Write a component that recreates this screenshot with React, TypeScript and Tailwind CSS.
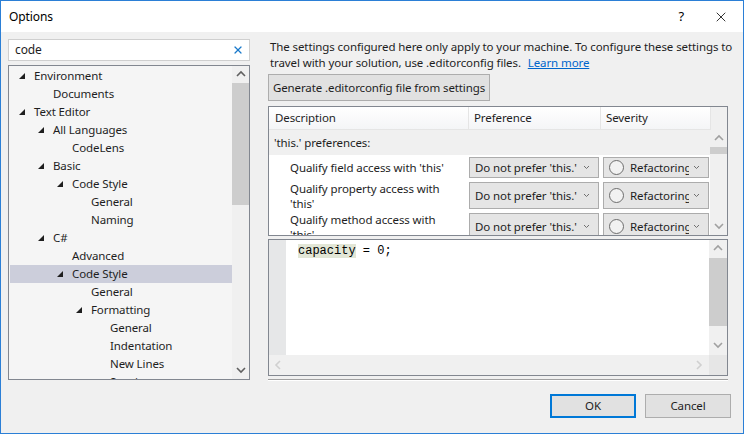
import { X } from "lucide-react";

interface TreeItem {
  label: string;
  depth: number;
  expanded?: boolean;
  selected?: boolean;
}

const tree: TreeItem[] = [
  { label: "Environment", depth: 0, expanded: true },
  { label: "Documents", depth: 1 },
  { label: "Text Editor", depth: 0, expanded: true },
  { label: "All Languages", depth: 1, expanded: true },
  { label: "CodeLens", depth: 2 },
  { label: "Basic", depth: 1, expanded: true },
  { label: "Code Style", depth: 2, expanded: true },
  { label: "General", depth: 3 },
  { label: "Naming", depth: 3 },
  { label: "C#", depth: 1, expanded: true },
  { label: "Advanced", depth: 2 },
  { label: "Code Style", depth: 2, expanded: true, selected: true },
  { label: "General", depth: 3 },
  { label: "Formatting", depth: 3, expanded: true },
  { label: "General", depth: 4 },
  { label: "Indentation", depth: 4 },
  { label: "New Lines", depth: 4 },
  { label: "Spacing", depth: 4 },
];

const rows = [
  { text: ["Qualify field access with 'this'"], h: "h-[25px]" },
  { text: ["Qualify property access with", "'this'"], h: "h-[31px]" },
  { text: ["Qualify method access with", "'this'"], h: "h-[31px]" },
];

const font = "font-['Segoe_UI','Noto_Sans',sans-serif]";

function Expander() {
  return (
    <svg width="6" height="6" viewBox="0 0 6 6" className="block">
      <polygon points="6,0 6,6 0,6" fill="#1e1e1e" />
    </svg>
  );
}

function Chevron({ dir, color = "#606060" }: { dir: "up" | "down" | "left" | "right"; color?: string }) {
  const pts = {
    up: "1,6 5,2 9,6",
    down: "1,2 5,6 9,2",
    left: "6,1 2,5 6,9",
    right: "3,1 7,5 3,9",
  }[dir];
  return (
    <svg width="10" height="10" viewBox="0 0 10 10" className="block">
      <polyline points={pts} fill="none" stroke={color} strokeWidth="1.6" />
    </svg>
  );
}

function SmallChevron() {
  return (
    <svg width="7" height="5" viewBox="0 0 7 5" className="block">
      <polyline points="1,1 3.5,3.5 6,1" fill="none" stroke="#707070" strokeWidth="1" />
    </svg>
  );
}

function Dropdown({ severity }: { severity?: boolean }) {
  return (
    <div className="flex h-full items-center border border-[#acacac] bg-[#e5e5e5] pl-[5px] pr-[8px] overflow-hidden">
      {severity && <span className="mr-[6px] h-[15px] w-[15px] shrink-0 rounded-full border border-[#6d6d6d] bg-[#f2f2f2]" />}
      <span className="flex-1 overflow-hidden whitespace-nowrap">{severity ? "Refactoring" : "Do not prefer 'this.'"}</span>
      <span className="ml-[4px] shrink-0">
        <SmallChevron />
      </span>
    </div>
  );
}

export default function App() {
  return (
    <div className={`${font} text-[11.5px] tracking-[-0.1px] text-[#1e1e1e] w-[744px] h-[434px] border border-[#2b7fd6] bg-[#f0f0f0] flex flex-col overflow-hidden`}>
      {/* title bar */}
      <div className="h-[31px] bg-white flex items-center shrink-0">
        <span className="ml-[8px] text-[12px] text-black">Options</span>
        <span className="ml-auto mr-[29px] text-[13px] text-black">?</span>
        <span className="mr-[14px] text-black">
          <X size={16} strokeWidth={1.2} />
        </span>
      </div>

      <div className="flex flex-1 min-h-0 pt-[7px] pl-[7px]">
        {/* left column */}
        <div className="w-[242px] flex flex-col shrink-0">
          <div className="h-[22px] bg-white border border-[#cfcfcf] flex items-center pl-[6px] pr-[5px]">
            <span className="flex-1 text-[12px]">code</span>
            <X size={12} strokeWidth={2.4} className="text-[#1979ca]" />
          </div>
          <div className="mt-[4px] h-[315px] border border-[#828790] bg-[#f5f5f5] flex overflow-hidden">
            <div className="flex-1 pt-[1px] pl-[1px] overflow-hidden">
              {tree.map((t, i) => (
                <div
                  key={i}
                  className={`h-[18px] flex items-center whitespace-nowrap text-[#1e1e1e] ${t.selected ? "bg-[#cccedb]" : ""}`}
                >
                  <span className="shrink-0" style={{ width: 9 + t.depth * 19 }} />
                  <span className="w-[8px] shrink-0 flex items-center">{t.expanded && <Expander />}</span>
                  <span className="ml-[7px]">{t.label}</span>
                </div>
              ))}
            </div>
            <div className="w-[17px] bg-[#f0f0f0] flex flex-col items-center shrink-0">
              <div className="h-[17px] flex items-center justify-center">
                <Chevron dir="up" />
              </div>
              <div className="w-[17px] h-[122px] bg-[#cdcdcd]" />
              <div className="flex-1" />
              <div className="h-[17px] flex items-center justify-center">
                <Chevron dir="down" />
              </div>
            </div>
          </div>
        </div>

        {/* right column */}
        <div className="ml-[18px] w-[460px] flex flex-col">
          <div className="pl-[2px] leading-[16px] whitespace-nowrap">
            The settings configured here only apply to your machine. To configure these settings to
            <br />
            travel with your solution, use .editorconfig files.{" "}
            <span className="ml-[4px] text-[#0066cc] underline">Learn more</span>
          </div>
          <div className="mt-[3px] h-[27px] w-[222px] border border-[#adadad] bg-[#e1e1e1] flex items-center justify-center whitespace-nowrap">
            Generate .editorconfig file from settings
          </div>

          {/* table */}
          <div className="mt-[5px] h-[130px] border border-[#828790] bg-white flex flex-col overflow-hidden">
            <div className="h-[23px] flex shrink-0">
              <div className="w-[200px] bg-gradient-to-b from-white to-[#f4f5f7] border-r border-[#e5e5e5] border-b border-b-[#e5e5e5] pl-[6px] flex items-center">Description</div>
              <div className="w-[132px] bg-gradient-to-b from-white to-[#f4f5f7] border-r border-[#e5e5e5] border-b border-b-[#e5e5e5] pl-[5px] flex items-center">Preference</div>
              <div className="w-[110px] bg-gradient-to-b from-white to-[#f4f5f7] border-r border-[#e5e5e5] border-b border-b-[#e5e5e5] pl-[5px] flex items-center">Severity</div>
              <div className="flex-1 bg-[#f0f0f0]" />
            </div>
            <div className="flex flex-1 min-h-0">
              <div className="flex-1 overflow-hidden">
                <div className="h-[25px] bg-[#f0f0f0] pl-[5px] flex items-center">'this.' preferences:</div>
                {rows.map((r, i) => (
                  <div key={i} className={`${r.h} flex bg-white`}>
                    <div className="w-[200px] pl-[21px] leading-[15px] flex flex-col justify-center overflow-hidden">
                      {r.text.map((l) => (
                        <span key={l}>{l}</span>
                      ))}
                    </div>
                    <div className="w-[132px] py-[2px] pr-[2px]">
                      <Dropdown />
                    </div>
                    <div className="w-[108px] py-[2px] pl-[2px]">
                      <Dropdown severity />
                    </div>
                  </div>
                ))}
              </div>
              <div className="w-[17px] bg-[#f0f0f0] flex flex-col items-center shrink-0">
                <div className="h-[17px] flex items-center justify-center">
                  <Chevron dir="up" color="#a0a0a0" />
                </div>
                <div className="w-[17px] h-[7px] bg-[#cdcdcd]" />
                <div className="flex-1" />
                <div className="h-[17px] flex items-center justify-center">
                  <Chevron dir="down" color="#a0a0a0" />
                </div>
              </div>
            </div>
          </div>

          {/* code preview */}
          <div className="mt-[3px] h-[137px] border border-[#828790] flex flex-col overflow-hidden">
            <div className="flex flex-1 min-h-0">
              <div className="w-[17px] bg-[#e6e7e8] shrink-0" />
              <div className="flex-1 bg-white pl-[12px] pt-[1px]">
                <span className="font-['Liberation_Mono',monospace] text-[12px] tracking-normal leading-[14px] text-black whitespace-pre">
                  <span className="bg-[#e2e6d6]">capacity</span> = 0;
                </span>
              </div>
              <div className="w-[18px] bg-[#f0f0f0] flex flex-col items-center shrink-0">
                <div className="h-[18px] flex items-center justify-center">
                  <Chevron dir="up" color="#a0a0a0" />
                </div>
                <div className="w-[18px] h-[68px] bg-[#cdcdcd]" />
                <div className="flex-1" />
                <div className="h-[18px] flex items-center justify-center">
                  <Chevron dir="down" color="#a0a0a0" />
                </div>
              </div>
            </div>
            <div className="h-[20px] flex shrink-0">
              <div className="flex-1 bg-[#f0f0f0] flex items-center justify-between px-[5px]">
                <Chevron dir="left" color="#d0d0d0" />
                <Chevron dir="right" color="#d0d0d0" />
              </div>
              <div className="w-[18px] bg-[#e6e6e6]" />
            </div>
          </div>

          <div className="mt-[3px] h-[2px] border-t border-[#a0a0a0] border-b border-b-white" />

          <div className="mt-[13px] flex justify-end gap-[9px] -mr-[3px]">
            <div className="w-[86px] h-[24px] border-2 border-[#0078d7] bg-[#e1e1e1] flex items-center justify-center">OK</div>
            <div className="w-[86px] h-[24px] border border-[#adadad] bg-[#e1e1e1] flex items-center justify-center">Cancel</div>
          </div>
        </div>
      </div>
    </div>
  );
}
